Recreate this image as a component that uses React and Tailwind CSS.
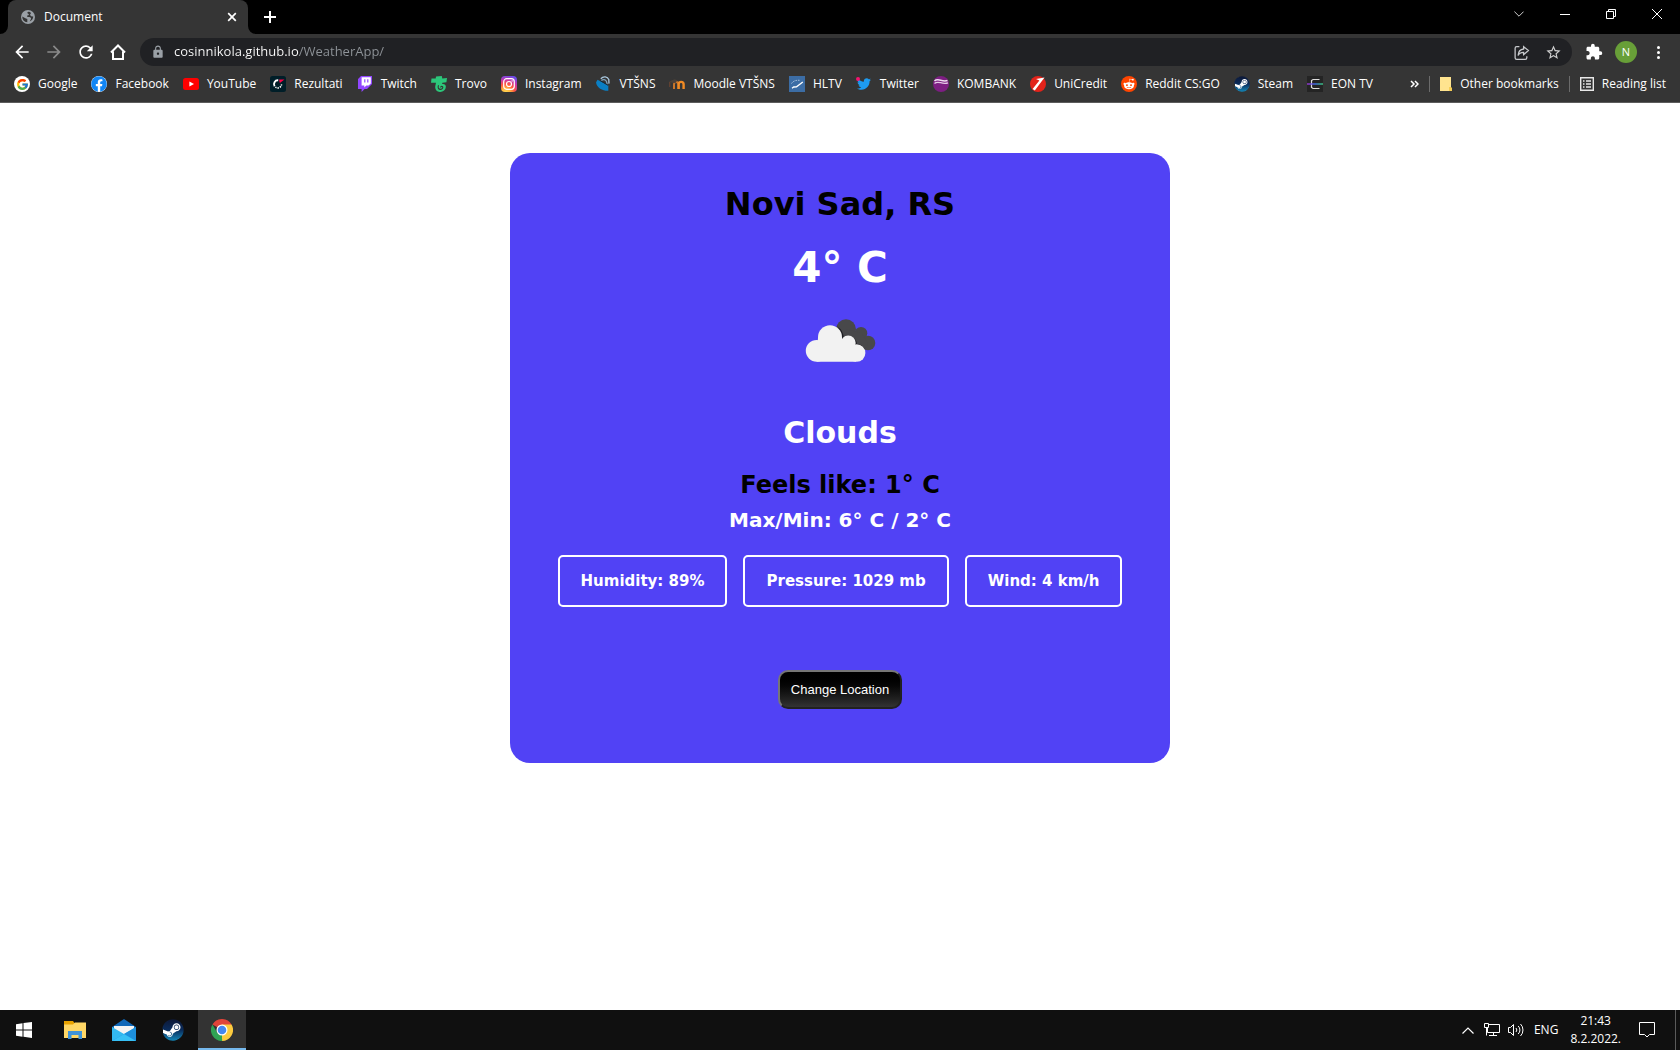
import React from "react";
import { FaFacebook, FaTwitter, FaRedditAlien, FaSteam } from "react-icons/fa";
import { FcGoogle } from "react-icons/fc";
import { MdLock, MdExtension, MdOutlineStarBorder, MdArrowBack, MdArrowForward, MdRefresh } from "react-icons/md";

function GoogleIcon() {
  return (
    <span className="flex size-4 items-center justify-center rounded-full bg-white">
      <FcGoogle className="size-[13px]" />
    </span>
  );
}

function FacebookIcon() {
  return (
    <span className="flex size-4 items-center justify-center rounded-full bg-white">
      <FaFacebook className="size-4 text-[#1186f5]" />
    </span>
  );
}

function YouTubeIcon() {
  return (
    <svg viewBox="0 0 16 16" className="size-4">
      <rect y="2" width="16" height="12" rx="2.5" fill="#f00" />
      <path d="M6.4 5.5 11 8 6.4 10.5z" fill="#fff" />
    </svg>
  );
}

function RezultatiIcon() {
  return (
    <svg viewBox="0 0 16 16" className="size-4">
      <rect width="16" height="16" rx="2.5" fill="#001e28" />
      <path d="M8.200 4.300A3.900 3.900 0 0 0 4.600 10.300" fill="none" stroke="#fff" strokeWidth="1.900" />
      <path d="M5.400 11.200a4 4 0 0 0 6.200-2.800" fill="none" stroke="#fff" strokeWidth="1.500" strokeDasharray="1.300 .9" />
      <path d="M9 3.600H14.500L9.800 7z" fill="#ff0046" />
    </svg>
  );
}

function TwitchIcon() {
  return (
    <svg viewBox="0 0 16 16" className="size-4">
      <path d="M4 0 1 3v10h3.600v3l3-3H10l5-5V0z" fill="#9146ff" />
      <path d="M4.600 1.200h9.200v6.200l-2.200 2.200H9.300l-2 2v-2H4.600z" fill="#fff" />
      <path d="M7.200 3.200h1.200v3.200H7.200zM10.200 3.200h1.200v3.200h-1.200z" fill="#9146ff" />
    </svg>
  );
}

function TrovoIcon() {
  return (
    <svg viewBox="0 0 16 16" className="size-4">
      <path d="M5 .6 10.800 0l.5 2.400L16 2l-.6 4.200-4 .5-.3 1.400c2.300-.5 4 .8 3.700 3-.2 3-2.800 5-6 4.900-3.600-.2-5.200-2.800-4.400-6.500L5 6.700 0 6.800l.5-4.200 4.200-.2z" fill="#2cc67a" />
      <path d="M7.500 9.300c-1 2.500.2 4.300 2.200 4.100 1.700-.2 2.600-1.800 1.800-2.700-.7-.7-1.900-.2-1.900.7" fill="none" stroke="#353535" strokeWidth="1.100" />
    </svg>
  );
}

function InstagramIcon() {
  return (
    <svg viewBox="0 0 16 16" className="size-4">
      <defs>
        <radialGradient id="ig" cx=".3" cy="1.050" r="1.100">
          <stop offset="0" stopColor="#fd5" />
          <stop offset=".25" stopColor="#ffb640" />
          <stop offset=".5" stopColor="#ff543e" />
          <stop offset=".75" stopColor="#c837ab" />
          <stop offset="1" stopColor="#6a4be8" />
        </radialGradient>
      </defs>
      <rect width="16" height="16" rx="4" fill="url(#ig)" />
      <rect x="2.700" y="2.700" width="10.600" height="10.600" rx="3" fill="none" stroke="#fff" strokeWidth="1.200" />
      <circle cx="8" cy="8" r="2.500" fill="none" stroke="#fff" strokeWidth="1.200" />
      <circle cx="11.100" cy="4.900" r=".7" fill="#fff" />
    </svg>
  );
}

function VtsIcon() {
  return (
    <svg viewBox="0 0 16 16" className="size-4">
      <path d="M0 6.500 1.500 3.800 12.300 9.500v5.300C6.500 15 1 12 0 6.500z" fill="#0a7fc4" />
      <path d="M4.800 2.800C7.500-.2 11.500.6 12.800 3.600l.2 4" fill="none" stroke="#a9c7de" strokeWidth="1.300" />
      <path d="M5.300 4.500c2-1.700 4.200-1 5.200 1l.8 3" fill="none" stroke="#7fa2bb" strokeWidth="1.200" />
      <path d="m4.500 4.800 7.500 4.500" stroke="#12293a" strokeWidth="1" />
    </svg>
  );
}

function MoodleIcon() {
  return (
    <svg viewBox="0 0 16 16" className="size-4">
      <path d="M5 13V8.500c0-3.500 4.500-3.200 4.500 0V13" fill="none" stroke="#c9752a" strokeWidth="2" />
      <path d="M9.600 13V8.300c0-3.200 5-3.200 5 0V13" fill="none" stroke="#f08a24" strokeWidth="2.400" />
      <path d="M0 5.500 5.500 3.300 8.500 4.300 6.500 7 3 6.800z" fill="#4a4038" />
      <path d="M.8 6v5" stroke="#7a4a30" strokeWidth=".9" />
    </svg>
  );
}

function HltvIcon() {
  return (
    <svg viewBox="0 0 16 16" className="size-4">
      <rect width="16" height="16" fill="#3c6da5" />
      <path d="M13.800 6 7.500 10.800l-2.800.2L3 12.200" fill="none" stroke="#fff" strokeWidth="1.300" />
      <path d="M2.500 7.500C4 5 7 4 10.500 4.300" fill="none" stroke="#a9c1dc" strokeWidth="1" strokeDasharray="1.500 1" />
    </svg>
  );
}

function TwitterIcon() {
  return (
    <span className="relative flex size-4 items-center justify-center">
      <FaTwitter className="size-[14px] text-[#1d9bf0]" />
      <span className="absolute top-px left-0 size-1 rounded-full bg-[#f4136e]" />
    </span>
  );
}

function KombankIcon() {
  return (
    <svg viewBox="0 0 16 16" className="size-4">
      <circle cx="8" cy="8" r="8" fill="#7d1e82" />
      <path d="M1.500 5C5 1.500 9 6.500 14.500 4.500" fill="none" stroke="#efdcf0" strokeWidth="1.500" />
      <path d="M1.500 7.500C5 4 9 9 15 6.800" fill="none" stroke="#e4c8e6" strokeWidth="1.300" />
    </svg>
  );
}

function UniCreditIcon() {
  return (
    <svg viewBox="0 0 16 16" className="size-4">
      <circle cx="8" cy="8" r="8" fill="#e2231a" />
      <path d="M6 3 14.500 1.500 4.800 14.600 2.600 13 9.400 4.500z" fill="#fff" />
    </svg>
  );
}

function RedditIcon() {
  return (
    <span className="flex size-4 items-center justify-center rounded-full bg-[#ff4500]">
      <FaRedditAlien className="size-3 text-white" />
    </span>
  );
}

function SteamGradient() {
  return (
    <svg className="absolute size-0" aria-hidden="true">
      <defs>
        <linearGradient id="steam" x1="0" y1="0" x2="0" y2="1">
          <stop offset="0" stopColor="#0d1836" />
          <stop offset=".5" stopColor="#0a2c5c" />
          <stop offset="1" stopColor="#1387b8" />
        </linearGradient>
      </defs>
    </svg>
  );
}

function SteamIcon({ className }) {
  return (
    <span className="flex rounded-full bg-[radial-gradient(circle,#ffffff_64%,transparent_66%)]">
      <FaSteam fill="url(#steam)" className={className} />
    </span>
  );
}

function EonIcon() {
  return (
    <svg viewBox="0 0 16 16" className="size-4">
      <defs>
        <linearGradient id="eon">
          <stop offset="0" stopColor="#a02fd0" />
          <stop offset=".5" stopColor="#3f6df0" />
          <stop offset="1" stopColor="#3ad07a" />
        </linearGradient>
      </defs>
      <rect width="16" height="16" fill="#242424" />
      <path d="M12.500 3.500H6L4.500 4.500v7l1.500 1h6.500" fill="none" stroke="#ddd" strokeWidth="1.200" />
      <rect y="7.300" width="16" height="1.400" fill="url(#eon)" />
    </svg>
  );
}

const bookmarks = [
  ["Google", <GoogleIcon />],
  ["Facebook", <FacebookIcon />],
  ["YouTube", <YouTubeIcon />],
  ["Rezultati", <RezultatiIcon />],
  ["Twitch", <TwitchIcon />],
  ["Trovo", <TrovoIcon />],
  ["Instagram", <InstagramIcon />],
  ["VTŠNS", <VtsIcon />],
  ["Moodle VTŠNS", <MoodleIcon />],
  ["HLTV", <HltvIcon />],
  ["Twitter", <TwitterIcon />],
  ["KOMBANK", <KombankIcon />],
  ["UniCredit", <UniCreditIcon />],
  ["Reddit CS:GO", <RedditIcon />],
  ["Steam", <SteamIcon className="size-4" />],
  ["EON TV", <EonIcon />],
];

function GlobeIcon() {
  return (
    <svg viewBox="0 0 16 16" className="size-[14px]">
      <circle cx="8" cy="8" r="8" fill="#9aa0a6" />
      <path d="M1.500 7.500 5 9.500l2.200.8v3.700C3.500 13.800 1.400 11 1.500 7.500zM8.500 2c-1.800.3-1.600 2-.3 2.200 1.500.3.800 2-.8 2.200-1 .2-.6 1.500.6 1.500 1.800 0 3.300.3 3.500 1.700.1 1-1 1.600-1.500 3.400 2.500-1 4-3 4-5.500L11.500 7 10.300 5.500l1.200-2C10.500 2.300 9.500 2 8.500 2z" fill="#353535" />
    </svg>
  );
}

function TabStrip() {
  return (
    <div className="flex h-[34px] bg-black">
      <div className="relative ml-2 flex w-60 items-center rounded-t-lg bg-[#353535] pr-[10px] pl-[13px] text-white">
        <svg viewBox="0 0 8 8" className="absolute bottom-0 -left-2 size-2">
          <path d="M8 0v8H0a8 8 0 0 0 8-8z" fill="#353535" />
        </svg>
        <svg viewBox="0 0 8 8" className="absolute -right-2 bottom-0 size-2">
          <path d="M0 0v8h8a8 8 0 0 1-8-8z" fill="#353535" />
        </svg>
        <GlobeIcon />
        <span className="ml-[9px] flex-1 text-xs">Document</span>
        <button aria-label="Close tab" className="p-px">
          <svg viewBox="0 0 10 10" className="size-[10px]">
            <path d="m1.200 1.200 7.600 7.600m0-7.600L1.200 8.800" stroke="#fff" strokeWidth="1.700" />
          </svg>
        </button>
      </div>
      <button aria-label="New tab" className="ml-4 flex items-center">
        <svg viewBox="0 0 12 12" className="size-3">
          <path d="M6 0v12M0 6h12" stroke="#fff" strokeWidth="2" />
        </svg>
      </button>
      <div className="ml-auto flex h-7 items-center">
        <button aria-label="Search tabs" className="flex w-[46px] justify-center">
          <svg viewBox="0 0 10 6" className="h-[6px] w-[10px]">
            <path d="m.4.600 4.600 4.600L9.600.600" fill="none" stroke="#ccc" />
          </svg>
        </button>
        <button aria-label="Minimize" className="flex w-[46px] justify-center">
          <span className="h-px w-[10px] bg-white" />
        </button>
        <button aria-label="Restore" className="flex w-[46px] justify-center">
          <svg viewBox="0 0 10 10" className="size-[10px]" fill="none" stroke="#fff">
            <path d="M.5 2.500h7v7h-7zM2.500 2.500v-2h7v7h-2" />
          </svg>
        </button>
        <button aria-label="Close" className="flex w-[46px] justify-center">
          <svg viewBox="0 0 10 10" className="size-[10px]">
            <path d="m0 0 10 10M10 0 0 10" stroke="#fff" />
          </svg>
        </button>
      </div>
    </div>
  );
}

function Toolbar() {
  return (
    <div className="flex h-9 items-center bg-[#353535] pr-5 pl-3 text-white">
      <button aria-label="Back" className="mr-3"><MdArrowBack className="size-5" /></button>
      <button aria-label="Forward" className="mr-3"><MdArrowForward className="size-5 text-[#8a8a8a]" /></button>
      <button aria-label="Reload" className="mr-3"><MdRefresh className="size-5" /></button>
      <button aria-label="Home" className="mr-3">
        <svg viewBox="0 0 20 20" className="size-5">
          <path d="M3 10.500 10 3.500l7 7M5 9.500V17h10V9.500" fill="none" stroke="#fff" strokeWidth="2" />
        </svg>
      </button>
      <div className="flex h-7 flex-1 items-center rounded-full bg-[#202124] pr-[10px] pl-[11px]">
        <MdLock className="size-[14px] text-[#9aa0a6]" />
        <input
          aria-label="Address"
          defaultValue="cosinnikola.github.io/WeatherApp/"
          className="ml-[9px] min-w-0 flex-1 bg-[linear-gradient(to_right,#ffffff_125px,#8f9499_125px)] bg-clip-text text-[13px] text-transparent outline-none"
        />
        <button aria-label="Share">
          <svg viewBox="0 0 16 16" className="size-[17px]" fill="none" stroke="#c7c9cc" strokeWidth="1.200">
            <path d="M6 2.500H3.500a1.500 1.500 0 0 0-1.500 1.500v9A1.500 1.500 0 0 0 3.500 14.500h8A1.500 1.500 0 0 0 13 13v-1.500" />
            <path d="M10 2.500 14.500 6.200 10 10V7.800C7.300 7.700 5.800 8.700 4.800 10.800 5 7.500 6.800 5 10 4.700z" />
          </svg>
        </button>
        <button aria-label="Bookmark this page" className="ml-[15px]"><MdOutlineStarBorder className="size-[17px] text-[#d0d0d0]" /></button>
      </div>
      <button aria-label="Extensions" className="ml-[13px]"><MdExtension className="size-[18px]" /></button>
      <button aria-label="Profile" className="ml-3 flex size-[22px] items-center justify-center rounded-full bg-[#689f38] text-[11px]">N</button>
      <button aria-label="Menu" className="ml-5 flex flex-col gap-[2px]">
        <span className="size-[3px] rounded-full bg-white" />
        <span className="size-[3px] rounded-full bg-white" />
        <span className="size-[3px] rounded-full bg-white" />
      </button>
    </div>
  );
}

function BookmarksBar() {
  return (
    <nav className="flex h-[33px] items-center border-b border-[#5c5c5c] bg-[#353535] px-[14px] pb-1 text-xs whitespace-nowrap text-white">
      <div className="flex gap-[14px]">
        {bookmarks.map(([name, icon]) => (
          <a key={name} href="#" className="flex items-center gap-2">
            {icon}
            {name}
          </a>
        ))}
      </div>
      <button aria-label="More bookmarks" className="ml-auto">
        <svg viewBox="0 0 9 8" className="h-2 w-[9px]">
          <path d="m1 1 3 3-3 3M5 1l3 3-3 3" fill="none" stroke="#fff" strokeWidth="1.500" />
        </svg>
      </button>
      <span className="mx-[10px] h-4 w-px bg-[#6b6b6b]" />
      <button className="flex items-center gap-2">
        <svg viewBox="0 0 12 14" className="h-[14px] w-3">
          <path d="M0 0h11v10l1 1v3H0z" fill="#f5cd55" />
          <path d="M0 0h11v10H9v4H0z" fill="#ffe48f" />
        </svg>
        Other bookmarks
      </button>
      <span className="mx-[10px] h-4 w-px bg-[#6b6b6b]" />
      <button className="flex items-center gap-2">
        <svg viewBox="0 0 14 14" className="size-[14px]" fill="none" stroke="#e8e8e8" strokeWidth="1.400">
          <path d="M.7.700h12.600v12.600H.700z" />
          <path d="M3 4h1.500M6 4h5M3 7h1.500M6 7h5M3 10h1.500M6 10h5" />
        </svg>
        Reading list
      </button>
    </nav>
  );
}

function CloudIcon() {
  return (
    <svg viewBox="0 0 100 96" className="h-24 w-[100px]" role="img" aria-label="Broken clouds">
      <g fill="#48484a">
        <circle cx="56" cy="36.300" r="10" />
        <circle cx="71" cy="40.300" r="6.300" />
        <circle cx="78" cy="50" r="7.300" />
        <path d="M56 36 71 40l7 10-3 6.500L56 48z" />
      </g>
      <path d="M47 33.500A12.800 12.800 0 0 1 53.500 45.200a8.300 8.300 0 0 1 13.400 5.800 9.600 9.600 0 0 1 8.300 6L55 60 42 44z" fill="#1d1d22" />
      <g fill="#f2f2f2">
        <circle cx="40" cy="44.300" r="12" />
        <circle cx="58.200" cy="50" r="7.500" />
        <circle cx="26.700" cy="57.800" r="10.900" />
        <circle cx="66.700" cy="60" r="8.700" />
        <path d="M28 45h24v5l14 3v15.700H26.700V58z" />
      </g>
    </svg>
  );
}

function WeatherCard() {
  return (
    <section className="mx-auto flex w-full max-w-[660px] flex-col items-center rounded-[20px] bg-[#5142f5] pt-[31px] pb-[54px] font-['Verdana','DejaVu_Sans',sans-serif] font-bold text-white">
      <h1 className="text-[32px] leading-10 text-black">Novi Sad, RS</h1>
      <p className="mt-[19px] text-[42px] leading-[50px]">4° C</p>
      <CloudIcon />
      <h2 className="mt-6 text-[30px] leading-10">Clouds</h2>
      <p className="mt-4 text-2xl leading-8 text-black">Feels like: 1° C</p>
      <p className="mt-[5px] text-xl leading-7">Max/Min: 6° C / 2° C</p>
      <div className="mt-[21px] flex gap-4 text-[15px] leading-6">
        {["Humidity: 89%", "Pressure: 1029 mb", "Wind: 4 km/h"].map((label) => (
          <div key={label} className="rounded-[5px] border-2 border-white px-[21px] py-3">
            {label}
          </div>
        ))}
      </div>
      <button className="mt-[63px] rounded-[10px] border-2 border-t-[#767676] border-r-[#212121] border-b-[#212121] border-l-[#767676] bg-linear-to-b from-black to-[#333] px-[11px] py-[10px] font-['Liberation_Sans',sans-serif] text-[13px] leading-[15px] font-normal">
        Change Location
      </button>
    </section>
  );
}

function ChromeLogo() {
  return (
    <svg viewBox="0 0 24 24" className="size-[22px]">
      <path d="M12 12 1.600 6A12 12 0 0 1 22.400 6z" fill="#e0443a" />
      <path d="M12 12V6h10.400A12 12 0 0 1 12 24z" fill="#fccb3f" />
      <path d="M12 24A12 12 0 0 1 1.600 6L6.800 15l5.200 3 3-1z" fill="#2fa354" />
      <path d="M12 12 17.200 15 12 24z" fill="#fccb3f" />
      <circle cx="12" cy="12" r="6" fill="#fff" />
      <circle cx="12" cy="12" r="4.700" fill="#4587f0" />
    </svg>
  );
}

function Taskbar() {
  return (
    <footer className="flex h-10 items-stretch bg-[#101010] text-xs text-white">
      <button aria-label="Start" className="mr-[3px] flex w-12 items-center justify-center">
        <svg viewBox="0 0 16 16" className="size-4" fill="#fff">
          <path d="M0 2.200 6.500 1.300v6.200H0zM7.500 1.100 16 0v7.500H7.500zM0 8.500h6.500v6.200L0 13.800zM7.500 8.500H16V16l-8.500-1.200z" />
        </svg>
      </button>
      <div className="flex gap-px">
        <button aria-label="File Explorer" className="flex w-12 items-center justify-center">
          <svg viewBox="0 0 22 18" className="h-[18px] w-[22px]">
            <path d="M0 0h9l1.500 2H22v15H0z" fill="#e8a200" />
            <path d="M0 3.500h9L11 1.500h11V17H0z" fill="#ffd766" />
            <path d="M4 18v-8h14v8h-3.500v-4h-7v4z" fill="#3f93d8" />
          </svg>
        </button>
        <button aria-label="Mail" className="flex w-12 items-center justify-center">
          <svg viewBox="0 0 24 22" className="h-[22px] w-6">
            <path d="M0 8 12 0l12 8v4H0z" fill="#0f67b8" />
            <path d="M2 7h20v9H2z" fill="#f3f3f3" />
            <path d="M0 8l12 7 12-7v14H0z" fill="#32b8f0" />
            <path d="M0 22 24 8v14z" fill="#1d8fdc" />
            <path d="M12 15 24 22H0z" fill="#37c0f5" />
          </svg>
        </button>
        <button aria-label="Steam" className="flex w-12 items-center justify-center">
          <SteamIcon className="size-[22px]" />
        </button>
        <button aria-label="Google Chrome" className="flex w-12 items-center justify-center border-b-2 border-[#76b9ed] bg-[#333] pt-[2px]">
          <ChromeLogo />
        </button>
      </div>
      <div className="ml-auto flex items-center">
        <button aria-label="Show hidden icons" className="mr-[10px]">
          <svg viewBox="0 0 12 7" className="h-[7px] w-3"><path d="m.5 6.500 5.500-5.500 5.500 5.500" fill="none" stroke="#fff" strokeWidth="1.200" /></svg>
        </button>
        <button aria-label="Network" className="mr-2">
          <svg viewBox="0 0 16 14" className="h-[14px] w-4" fill="none" stroke="#fff">
            <path d="M5 1.500h10.500v8H3.500V5M9.500 9.500v3M5 12.500h8M.5.500h4v4h-4zM2.500 4.500v8" />
          </svg>
        </button>
        <button aria-label="Volume" className="mr-[10px]">
          <svg viewBox="0 0 16 14" className="h-[14px] w-4" fill="none" stroke="#fff">
            <path d="M.5 4.500h2l3-3v11l-3-3h-2zM8 5a3 3 0 0 1 0 4M10.200 3a5.500 5.500 0 0 1 0 8M12.500 1a8.500 8.500 0 0 1 0 12" />
          </svg>
        </button>
        <button>ENG</button>
        <button className="ml-3 text-center leading-[18px]">
          21:43
          <br />
          8.2.2022.
        </button>
        <button aria-label="Notifications" className="mr-5 ml-[18px]">
          <svg viewBox="0 0 16 16" className="size-4" fill="none" stroke="#fff">
            <path d="M.5.500h15v12h-5l-2.500 2.500-2.500-2.500h-5z" />
          </svg>
        </button>
        <span className="mr-1 w-px self-stretch bg-[#5a5a5a]" />
      </div>
    </footer>
  );
}

export default function App() {
  return (
    <div className="flex min-h-screen flex-col bg-white font-['Open_Sans','Noto_Sans',sans-serif]">
      <SteamGradient />
      <header>
        <TabStrip />
        <Toolbar />
        <BookmarksBar />
      </header>
      <main className="flex-1 pt-[50px]">
        <WeatherCard />
      </main>
      <Taskbar />
    </div>
  );
}
